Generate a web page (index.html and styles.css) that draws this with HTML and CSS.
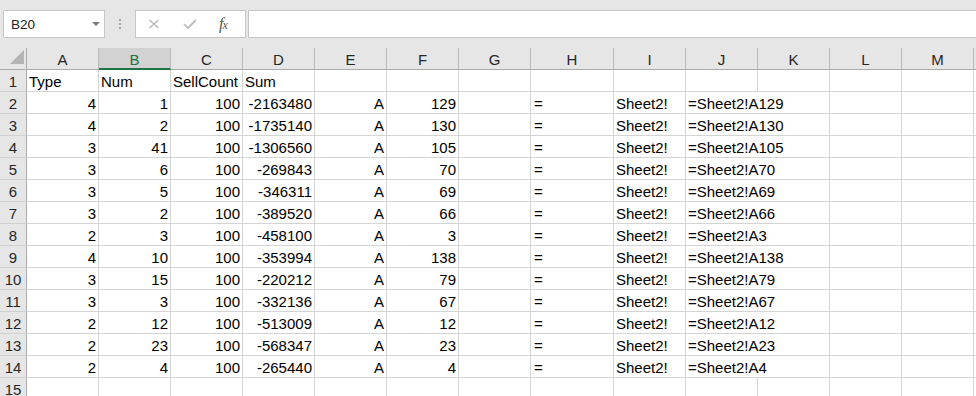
FILE: index.html
```html
<!DOCTYPE html>
<html>
<head>
<meta charset="utf-8">
<link rel="stylesheet" href="styles.css">
</head>
<body>
<div class="topbar">
  <div class="namebox"><span>B20</span><svg class="dd" width="8" height="4" viewBox="0 0 8 4"><path d="M0 0H8L4 4Z" fill="#7a7a7a"/></svg></div>
  <div class="grip"><i></i><i></i><i></i></div>
  <div class="fxbox">
    <svg width="12" height="10" viewBox="0 0 12 10"><path d="M1.5 1L10.5 9M10.5 1L1.5 9" stroke="#b9b9b9" stroke-width="1.4" fill="none"/></svg>
    <svg width="14" height="10" viewBox="0 0 14 10"><path d="M1 5.2L5 9L13 1" stroke="#bcbcbc" stroke-width="1.8" fill="none"/></svg>
    <span class="fx">f<span class="fxx">x</span></span>
  </div>
  <div class="formula"></div>
</div>
<div class="sheet">
  <div class="h corner"><svg width="14" height="14" viewBox="0 0 14 14"><path d="M14 0V14H0Z" fill="#b4b4b4"/></svg></div>
  <div class="h">A</div><div class="h sel">B</div><div class="h">C</div><div class="h">D</div><div class="h">E</div><div class="h">F</div><div class="h">G</div><div class="h">H</div><div class="h">I</div><div class="h">J</div><div class="h">K</div><div class="h">L</div><div class="h">M</div><div class="h"></div>

  <div class="rh">1</div><div class="c">Type</div><div class="c">Num</div><div class="c">SellCount</div><div class="c">Sum</div><div class="c"></div><div class="c"></div><div class="c"></div><div class="c"></div><div class="c"></div><div class="c"></div><div class="c"></div><div class="c"></div><div class="c"></div><div class="c"></div>

  <div class="rh">2</div><div class="c r">4</div><div class="c r">1</div><div class="c r">100</div><div class="c r">-2163480</div><div class="c r">A</div><div class="c r">129</div><div class="c"></div><div class="c eq">=</div><div class="c">Sheet2!</div><div class="c ov">=Sheet2!A129</div><div class="c"></div><div class="c"></div><div class="c"></div>

  <div class="rh">3</div><div class="c r">4</div><div class="c r">2</div><div class="c r">100</div><div class="c r">-1735140</div><div class="c r">A</div><div class="c r">130</div><div class="c"></div><div class="c eq">=</div><div class="c">Sheet2!</div><div class="c ov">=Sheet2!A130</div><div class="c"></div><div class="c"></div><div class="c"></div>

  <div class="rh">4</div><div class="c r">3</div><div class="c r">41</div><div class="c r">100</div><div class="c r">-1306560</div><div class="c r">A</div><div class="c r">105</div><div class="c"></div><div class="c eq">=</div><div class="c">Sheet2!</div><div class="c ov">=Sheet2!A105</div><div class="c"></div><div class="c"></div><div class="c"></div>

  <div class="rh">5</div><div class="c r">3</div><div class="c r">6</div><div class="c r">100</div><div class="c r">-269843</div><div class="c r">A</div><div class="c r">70</div><div class="c"></div><div class="c eq">=</div><div class="c">Sheet2!</div><div class="c ov">=Sheet2!A70</div><div class="c"></div><div class="c"></div><div class="c"></div>

  <div class="rh">6</div><div class="c r">3</div><div class="c r">5</div><div class="c r">100</div><div class="c r">-346311</div><div class="c r">A</div><div class="c r">69</div><div class="c"></div><div class="c eq">=</div><div class="c">Sheet2!</div><div class="c ov">=Sheet2!A69</div><div class="c"></div><div class="c"></div><div class="c"></div>

  <div class="rh">7</div><div class="c r">3</div><div class="c r">2</div><div class="c r">100</div><div class="c r">-389520</div><div class="c r">A</div><div class="c r">66</div><div class="c"></div><div class="c eq">=</div><div class="c">Sheet2!</div><div class="c ov">=Sheet2!A66</div><div class="c"></div><div class="c"></div><div class="c"></div>

  <div class="rh">8</div><div class="c r">2</div><div class="c r">3</div><div class="c r">100</div><div class="c r">-458100</div><div class="c r">A</div><div class="c r">3</div><div class="c"></div><div class="c eq">=</div><div class="c">Sheet2!</div><div class="c ov">=Sheet2!A3</div><div class="c"></div><div class="c"></div><div class="c"></div>

  <div class="rh">9</div><div class="c r">4</div><div class="c r">10</div><div class="c r">100</div><div class="c r">-353994</div><div class="c r">A</div><div class="c r">138</div><div class="c"></div><div class="c eq">=</div><div class="c">Sheet2!</div><div class="c ov">=Sheet2!A138</div><div class="c"></div><div class="c"></div><div class="c"></div>

  <div class="rh">10</div><div class="c r">3</div><div class="c r">15</div><div class="c r">100</div><div class="c r">-220212</div><div class="c r">A</div><div class="c r">79</div><div class="c"></div><div class="c eq">=</div><div class="c">Sheet2!</div><div class="c ov">=Sheet2!A79</div><div class="c"></div><div class="c"></div><div class="c"></div>

  <div class="rh">11</div><div class="c r">3</div><div class="c r">3</div><div class="c r">100</div><div class="c r">-332136</div><div class="c r">A</div><div class="c r">67</div><div class="c"></div><div class="c eq">=</div><div class="c">Sheet2!</div><div class="c ov">=Sheet2!A67</div><div class="c"></div><div class="c"></div><div class="c"></div>

  <div class="rh">12</div><div class="c r">2</div><div class="c r">12</div><div class="c r">100</div><div class="c r">-513009</div><div class="c r">A</div><div class="c r">12</div><div class="c"></div><div class="c eq">=</div><div class="c">Sheet2!</div><div class="c ov">=Sheet2!A12</div><div class="c"></div><div class="c"></div><div class="c"></div>

  <div class="rh">13</div><div class="c r">2</div><div class="c r">23</div><div class="c r">100</div><div class="c r">-568347</div><div class="c r">A</div><div class="c r">23</div><div class="c"></div><div class="c eq">=</div><div class="c">Sheet2!</div><div class="c ov">=Sheet2!A23</div><div class="c"></div><div class="c"></div><div class="c"></div>

  <div class="rh">14</div><div class="c r">2</div><div class="c r">4</div><div class="c r">100</div><div class="c r">-265440</div><div class="c r">A</div><div class="c r">4</div><div class="c"></div><div class="c eq">=</div><div class="c">Sheet2!</div><div class="c ov">=Sheet2!A4</div><div class="c"></div><div class="c"></div><div class="c"></div>

  <div class="rh">15</div><div class="c"></div><div class="c"></div><div class="c"></div><div class="c"></div><div class="c"></div><div class="c"></div><div class="c"></div><div class="c"></div><div class="c"></div><div class="c"></div><div class="c"></div><div class="c"></div><div class="c"></div><div class="c"></div>
</div>
</body>
</html>
```
FILE: styles.css
```css
html, body {
  margin: 0;
  padding: 0;
}
body {
  width: 976px;
  height: 396px;
  overflow: hidden;
  background: #ffffff;
  font-family: "Liberation Sans", Arial, sans-serif;
}
.topbar {
  height: 48px;
  box-sizing: border-box;
  background: #e6e6e6;
  display: flex;
  align-items: flex-start;
  padding: 10px 0 0 3px;
}
.namebox {
  width: 102px;
  height: 28px;
  box-sizing: border-box;
  border: 1px solid #c6c6c6;
  background: #ffffff;
  display: flex;
  align-items: center;
  justify-content: space-between;
  padding: 0 4px 0 7px;
  font-size: 13.5px;
  color: #222222;
}
.namebox span {
  padding-top: 1px;
}
.grip {
  width: 30px;
  display: flex;
  flex-direction: column;
  align-items: center;
  gap: 2px;
  padding-top: 9px;
}
.grip i {
  display: block;
  width: 2px;
  height: 2px;
  background: #a8a8a8;
}
.fxbox {
  width: 111px;
  height: 28px;
  box-sizing: border-box;
  border: 1px solid #c6c6c6;
  background: #ffffff;
  display: flex;
  align-items: center;
  gap: 23px;
  padding-left: 12px;
}
.fx {
  font-family: "Liberation Serif", "Times New Roman", serif;
  font-style: italic;
  font-size: 16px;
  color: #555555;
  margin-left: -1px;
  letter-spacing: -1px;
}
.fxx {
  font-size: 12px;
}
.formula {
  flex: 1;
  height: 28px;
  box-sizing: border-box;
  border: 1px solid #c6c6c6;
  background: #ffffff;
  margin-left: 2px;
  margin-right: -6px;
}
.sheet {
  display: grid;
  grid-template-columns: 27px repeat(7, 72px) 83px repeat(5, 72px) 10px;
  grid-auto-rows: 22px;
}
.sheet > div {
  box-sizing: border-box;
  border-right: 1px solid #d4d4d4;
  border-bottom: 1px solid #d4d4d4;
  font-size: 15px;
  line-height: 19px;
  padding: 2px 2px 0 2px;
  white-space: nowrap;
  overflow: hidden;
  color: #000000;
}
.sheet > .h {
  background: #e6e6e6;
  border-right-color: #bababa;
  border-bottom-color: #ababab;
  text-align: center;
  color: #262626;
}
.sheet > .sel {
  background: #d2d2d2;
  color: #217346;
  border-bottom: 2px solid #217346;
}
.sheet > .corner {
  border-right-color: #ababab;
  display: flex;
  justify-content: flex-end;
  align-items: flex-end;
  padding: 0 2px 5px 0;
}
.sheet > .rh {
  background: #e6e6e6;
  border-right-color: #ababab;
  border-bottom-color: #d0d0d0;
  text-align: center;
  color: #262626;
}
.sheet > .r {
  text-align: right;
}
.sheet > .eq {
  padding-left: 3px;
}
.sheet > .ov {
  grid-column: span 2;
}
```
